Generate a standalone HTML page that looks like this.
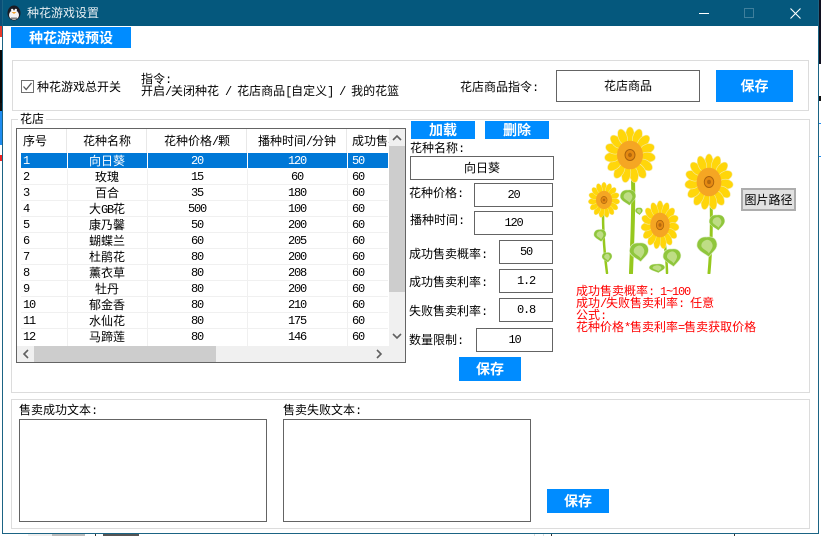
<!DOCTYPE html>
<html lang="zh"><head><meta charset="utf-8"><title>种花游戏设置</title>
<style>
html,body{margin:0;padding:0;width:821px;height:536px;overflow:hidden;background:#fff}
body{position:relative;font:12px/14px "WenQuanYi Zen Hei","Noto Sans CJK SC",sans-serif;color:#000}
div,span{position:absolute;white-space:nowrap;box-sizing:border-box}
tt{font-family:"Liberation Mono",monospace;font-size:12px;letter-spacing:-1.2px}
.n{font-family:"Liberation Mono",monospace;letter-spacing:-1.2px}
.g{border:1px solid #dcdcdc}
.in{border:1px solid #646464;background:#fff;text-align:center;display:flex;align-items:center;justify-content:center}
.b{background:#008cff;color:#fff;font-weight:bold;font-size:14px;text-align:center;display:flex;align-items:center;justify-content:center}
.l{line-height:14px}
.r{left:21px;width:367px;height:16px;border-bottom:1px solid #f0f0f0;line-height:15px}
.r span{top:0;text-align:center}
.r .a{left:0;width:45px;text-align:left;padding-left:2px}
.r .c1{left:46px;width:80px}.r .c2{left:126px;width:100px}.r .c3{left:226px;width:100px}
.r .e{left:326px;width:41px;text-align:left;padding-left:5px}
.r .a,.r .c2,.r .c3,.r .e{font-family:"Liberation Mono",monospace;letter-spacing:-1.2px;top:1px}
.r i{position:absolute;top:0;bottom:-1px;width:1px;background:#f0f0f0}
.h{top:129px;height:24px;line-height:24px;text-align:center}
.s{background:#f0f0f0}
.red{color:#f00;left:576px;line-height:12px;height:12px}
</style></head><body>
<!-- background desktop fragments -->
<div style="left:0;top:0;width:2px;height:26px;background:#0a4f78"></div>
<div style="left:0;top:26px;width:2px;height:11px;background:#e8392b"></div>
<div style="left:0;top:50px;width:2px;height:53px;background:#0a0a0a"></div>
<div style="left:0;top:103px;width:2px;height:8px;background:#111"></div>
<div style="left:0;top:111px;width:2px;height:34px;background:#1e8bf0"></div>
<div style="left:0;top:155px;width:2px;height:6px;background:#e22"></div>
<div style="left:819px;top:0;width:2px;height:64px;background:#101020"></div>
<div style="left:819px;top:96px;width:2px;height:5px;background:#111"></div>
<div style="left:819px;top:123px;width:2px;height:1px;background:#1e8bf0"></div>
<div style="left:819px;top:156px;width:2px;height:1px;background:#1e8bf0"></div>
<div style="left:28px;top:534px;width:24px;height:2px;background:#eee"></div>
<div style="left:52px;top:534px;width:33px;height:2px;background:#bbb"></div>
<div style="left:95px;top:534px;width:1px;height:2px;background:#333"></div>
<div style="left:103px;top:534px;width:36px;height:2px;background:#555"></div>
<div style="left:534px;top:534px;width:1px;height:2px;background:#ddd"></div>
<div style="left:543px;top:534px;width:1px;height:2px;background:#ddd"></div>
<div style="left:551px;top:534px;width:1px;height:2px;background:#333"></div>
<div style="left:734px;top:534px;width:1px;height:2px;background:#333"></div>

<!-- window -->
<div style="left:2px;top:0;width:817px;height:534px;background:#fff;border:1px solid #1b6484;border-top:0"></div>
<div style="left:3px;top:0;width:815px;height:26px;background:#05587d"></div>
<svg style="position:absolute;left:6px;top:5px" width="16" height="16" viewBox="0 0 16 16">
<ellipse cx="8" cy="8" rx="6.5" ry="7.5" fill="#1c1c24"/><ellipse cx="8" cy="10" rx="5" ry="4.8" fill="#f4f4f4"/>
<circle cx="6.2" cy="5" r="1.2" fill="#fff"/><circle cx="9.8" cy="5" r="1.2" fill="#fff"/><path d="M5.5 7h5l-2.5 2z" fill="#f0a030"/><rect x="5" y="12.5" width="6" height="1.4" fill="#777"/></svg>
<div style="left:27px;top:6px;color:#e6eef2">种花游戏设置</div>
<div style="left:699px;top:13px;width:10px;height:1px;background:#fff"></div>
<div style="left:744px;top:8px;width:10px;height:10px;border:1px solid #3f7f9c"></div>
<svg style="position:absolute;left:789px;top:7px" width="13" height="13"><path d="M1.5 1.5L11.5 11.5M11.5 1.5L1.5 11.5" stroke="#fff" stroke-width="1.1" fill="none"/></svg>

<div class="b" style="left:11px;top:27px;width:120px;height:21px">种花游戏预设</div>

<!-- group 1 -->
<div class="g" style="left:12px;top:60px;width:797px;height:51px"></div>
<svg style="position:absolute;left:21px;top:80px" width="13" height="13"><rect x=".5" y=".5" width="12" height="12" fill="#fff" stroke="#707070"/><path d="M2.5 6.5L5.2 9.5L10.5 3" stroke="#555" stroke-width="1.3" fill="none"/></svg>
<div class="l" style="left:37px;top:80px">种花游戏总开关</div>
<div class="l" style="left:141px;top:72px;">指令<tt>:</tt></div>
<div class="l" style="left:141px;top:84px;">开启<tt>/</tt>关闭种花<tt> / </tt>花店商品<tt>[</tt>自定义<tt>] / </tt>我的花篮</div>
<div class="l" style="left:460px;top:80px">花店商品指令<tt>:</tt></div>
<div class="in" style="left:556px;top:70px;width:144px;height:32px">花店商品</div>
<div class="b" style="left:716px;top:70px;width:77px;height:32px">保存</div>

<!-- group 2 -->
<div class="g" style="left:11px;top:119px;width:799px;height:274px"></div>
<div class="l" style="left:18px;top:112px;background:#fff;padding:0 2px">花店</div>

<!-- table -->
<div style="left:16px;top:128px;width:390px;height:235px;border:1px solid #646464;background:#fff"></div>
<div class="h" style="left:17px;width:50px;text-align:left;padding-left:6px">序号</div>
<div class="h" style="left:67px;width:80px">花种名称</div>
<div class="h" style="left:147px;width:100px">花种价格<tt>/</tt>颗</div>
<div class="h" style="left:247px;width:100px">播种时间<tt>/</tt>分钟</div>
<div class="h" style="left:347px;width:42px;overflow:hidden;text-align:left;padding-left:5px">成功售卖概率</div>
<div style="left:66px;top:129px;width:1px;height:24px;background:#e8e8e8"></div>
<div style="left:146px;top:129px;width:1px;height:24px;background:#e8e8e8"></div>
<div style="left:246px;top:129px;width:1px;height:24px;background:#e8e8e8"></div>
<div style="left:346px;top:129px;width:1px;height:24px;background:#e8e8e8"></div>

<div class="r" style="top:153px;background:#0078d7;color:#fff;border-bottom:0;height:15px"><span class="a">1</span><span class="c1">向日葵</span><span class="c2">20</span><span class="c3">120</span><span class="e">50</span><i style="left:46px;background:#fff"></i><i style="left:126px;background:#fff"></i><i style="left:226px;background:#fff"></i><i style="left:326px;background:#fff"></i></div>
<div class="r" style="top:169px"><span class="a">2</span><span class="c1">玫瑰</span><span class="c2">15</span><span class="c3">60</span><span class="e">60</span><i style="left:46px"></i><i style="left:126px"></i><i style="left:226px"></i><i style="left:326px"></i></div>
<div class="r" style="top:185px"><span class="a">3</span><span class="c1">百合</span><span class="c2">35</span><span class="c3">180</span><span class="e">60</span><i style="left:46px"></i><i style="left:126px"></i><i style="left:226px"></i><i style="left:326px"></i></div>
<div class="r" style="top:201px"><span class="a">4</span><span class="c1">大<tt>GB</tt>花</span><span class="c2">500</span><span class="c3">100</span><span class="e">60</span><i style="left:46px"></i><i style="left:126px"></i><i style="left:226px"></i><i style="left:326px"></i></div>
<div class="r" style="top:217px"><span class="a">5</span><span class="c1">康乃馨</span><span class="c2">50</span><span class="c3">200</span><span class="e">60</span><i style="left:46px"></i><i style="left:126px"></i><i style="left:226px"></i><i style="left:326px"></i></div>
<div class="r" style="top:233px"><span class="a">6</span><span class="c1">蝴蝶兰</span><span class="c2">60</span><span class="c3">205</span><span class="e">60</span><i style="left:46px"></i><i style="left:126px"></i><i style="left:226px"></i><i style="left:326px"></i></div>
<div class="r" style="top:249px"><span class="a">7</span><span class="c1">杜鹃花</span><span class="c2">80</span><span class="c3">200</span><span class="e">60</span><i style="left:46px"></i><i style="left:126px"></i><i style="left:226px"></i><i style="left:326px"></i></div>
<div class="r" style="top:265px"><span class="a">8</span><span class="c1">薰衣草</span><span class="c2">80</span><span class="c3">208</span><span class="e">60</span><i style="left:46px"></i><i style="left:126px"></i><i style="left:226px"></i><i style="left:326px"></i></div>
<div class="r" style="top:281px"><span class="a">9</span><span class="c1">牡丹</span><span class="c2">80</span><span class="c3">200</span><span class="e">60</span><i style="left:46px"></i><i style="left:126px"></i><i style="left:226px"></i><i style="left:326px"></i></div>
<div class="r" style="top:297px"><span class="a">10</span><span class="c1">郁金香</span><span class="c2">80</span><span class="c3">210</span><span class="e">60</span><i style="left:46px"></i><i style="left:126px"></i><i style="left:226px"></i><i style="left:326px"></i></div>
<div class="r" style="top:313px"><span class="a">11</span><span class="c1">水仙花</span><span class="c2">80</span><span class="c3">175</span><span class="e">60</span><i style="left:46px"></i><i style="left:126px"></i><i style="left:226px"></i><i style="left:326px"></i></div>
<div class="r" style="top:329px;height:16px;border-bottom:0"><span class="a">12</span><span class="c1">马蹄莲</span><span class="c2">80</span><span class="c3">146</span><span class="e">60</span><i style="left:46px"></i><i style="left:126px"></i><i style="left:226px"></i><i style="left:326px"></i></div>

<!-- scrollbars -->
<div class="s" style="left:389px;top:129px;width:16px;height:233px"></div>
<div style="left:389px;top:146px;width:16px;height:146px;background:#cdcdcd"></div>
<div class="s" style="left:17px;top:346px;width:388px;height:16px"></div>
<div style="left:34px;top:346px;width:182px;height:16px;background:#cdcdcd"></div>
<svg style="position:absolute;left:17px;top:129px" width="388" height="233" fill="none" stroke="#606060" stroke-width="1.6">
<path d="M376 11l4-4 4 4"/><path d="M376 205l4 4 4-4"/><path d="M11 221l-4 4 4 4"/><path d="M360 221l4 4-4 4"/></svg>

<!-- form -->
<div class="b" style="left:411px;top:121px;width:64px;height:18px">加载</div>
<div class="b" style="left:485px;top:121px;width:64px;height:18px">删除</div>
<div class="l" style="left:410px;top:141px">花种名称<tt>:</tt></div>
<div class="in" style="left:410px;top:156px;width:144px;height:24px">向日葵</div>
<div class="l" style="left:409px;top:186px">花种价格<tt>:</tt></div>
<div class="in n" style="left:474px;top:183px;width:79px;height:24px">20</div>
<div class="l" style="left:410px;top:213px">播种时间<tt>:</tt></div>
<div class="in n" style="left:474px;top:211px;width:79px;height:24px">120</div>
<div class="l" style="left:409px;top:247px">成功售卖概率<tt>:</tt></div>
<div class="in n" style="left:499px;top:240px;width:54px;height:24px">50</div>
<div class="l" style="left:409px;top:275px">成功售卖利率<tt>:</tt></div>
<div class="in n" style="left:499px;top:269px;width:54px;height:24px">1.2</div>
<div class="l" style="left:409px;top:304px">失败售卖利率<tt>:</tt></div>
<div class="in n" style="left:499px;top:298px;width:54px;height:24px">0.8</div>
<div class="l" style="left:409px;top:333px">数量限制<tt>:</tt></div>
<div class="in n" style="left:476px;top:328px;width:77px;height:24px">10</div>
<div class="b" style="left:459px;top:357px;width:62px;height:24px">保存</div>

<!-- sunflowers -->
<svg style="position:absolute;left:580px;top:120px" width="160" height="154" viewBox="580 120 160 154">
<defs>
<ellipse id="p" cx="0" cy="-18" rx="4.4" ry="7.5" fill="#ffd60a" stroke="#f5e9a0" stroke-width=".6"/>
<g id="f">
<use href="#p"/><use href="#p" transform="rotate(24)"/><use href="#p" transform="rotate(48)"/><use href="#p" transform="rotate(72)"/><use href="#p" transform="rotate(96)"/><use href="#p" transform="rotate(120)"/><use href="#p" transform="rotate(144)"/><use href="#p" transform="rotate(168)"/><use href="#p" transform="rotate(192)"/><use href="#p" transform="rotate(216)"/><use href="#p" transform="rotate(240)"/><use href="#p" transform="rotate(264)"/><use href="#p" transform="rotate(288)"/><use href="#p" transform="rotate(312)"/><use href="#p" transform="rotate(336)"/>
<circle r="13" fill="#f5a623"/><circle r="5" fill="#e58a12" stroke="#a8610c" stroke-width=".9"/><circle r="2" fill="#b56a0e"/>
</g>
<g id="lf"><path d="M0 0C-9-1-12 6-11 11C-9 16-3 18 2 22C7 16 12 13 11 7C10 1 5-1 0 0Z" fill="#8fc63c" stroke="#e2efcb" stroke-width=".7"/><path d="M0 3C-5 4-7 8-6 11C-4 14 0 15 2 18C5 14 7 11 6 8C5 5 3 3 0 3Z" fill="#bedd85"/></g>
</defs>
<g fill="none" stroke-linecap="round">
<path d="M633 180C634 210 632 245 631 273" stroke="#96c81e" stroke-width="4"/>
<path d="M603 212C603 240 605 258 607 273" stroke="#96c81e" stroke-width="2.5"/>
<path d="M665 245C666 255 667 265 667 273" stroke="#96c81e" stroke-width="2.5"/>
<path d="M711 200C712 225 711 250 709 273" stroke="#96c81e" stroke-width="3"/>
</g>
<use href="#lf" transform="translate(628,190) scale(.7)"/>
<use href="#lf" transform="translate(639,243) scale(.85)"/>
<use href="#lf" transform="translate(672,249) scale(.8)"/>
<use href="#lf" transform="translate(707,237) scale(.9)"/>
<use href="#lf" transform="translate(717,215) scale(.7)"/>
<use href="#lf" transform="translate(600,229.5) scale(.55)"/>
<use href="#lf" transform="translate(607,252.5) scale(.45)"/>
<use href="#lf" transform="translate(657,264) scale(.7,.4)"/>
<use href="#lf" transform="translate(639,207.7) scale(.33)"/>
<use href="#f" transform="translate(630,155) scale(1,1.1)"/>
<use href="#f" transform="translate(604,200) scale(.62,.7)"/>
<use href="#f" transform="translate(660,225) scale(.75,.95)"/>
<use href="#f" transform="translate(709,182) scale(.95,1.1)"/>
</svg>
<div style="left:741px;top:188px;width:55px;height:23px;background:#e1e1e1;border:2px solid #adadad;text-align:center;line-height:19px">图片路径</div>
<div class="red" style="top:285px">成功售卖概率<tt>: 1~100</tt></div>
<div class="red" style="top:297px">成功<tt>/</tt>失败售卖利率<tt>: </tt>任意</div>
<div class="red" style="top:309px">公式<tt>:</tt></div>
<div class="red" style="top:321px">花种价格<tt>*</tt>售卖利率<tt>=</tt>售卖获取价格</div>

<!-- group 3 -->
<div class="g" style="left:11px;top:399px;width:799px;height:130px"></div>
<div class="l" style="left:19px;top:403px">售卖成功文本<tt>:</tt></div>
<div class="in" style="left:19px;top:419px;width:248px;height:103px"></div>
<div class="l" style="left:283px;top:403px">售卖失败文本<tt>:</tt></div>
<div class="in" style="left:283px;top:419px;width:248px;height:103px"></div>
<div class="b" style="left:547px;top:489px;width:62px;height:24px">保存</div>
</body></html>
